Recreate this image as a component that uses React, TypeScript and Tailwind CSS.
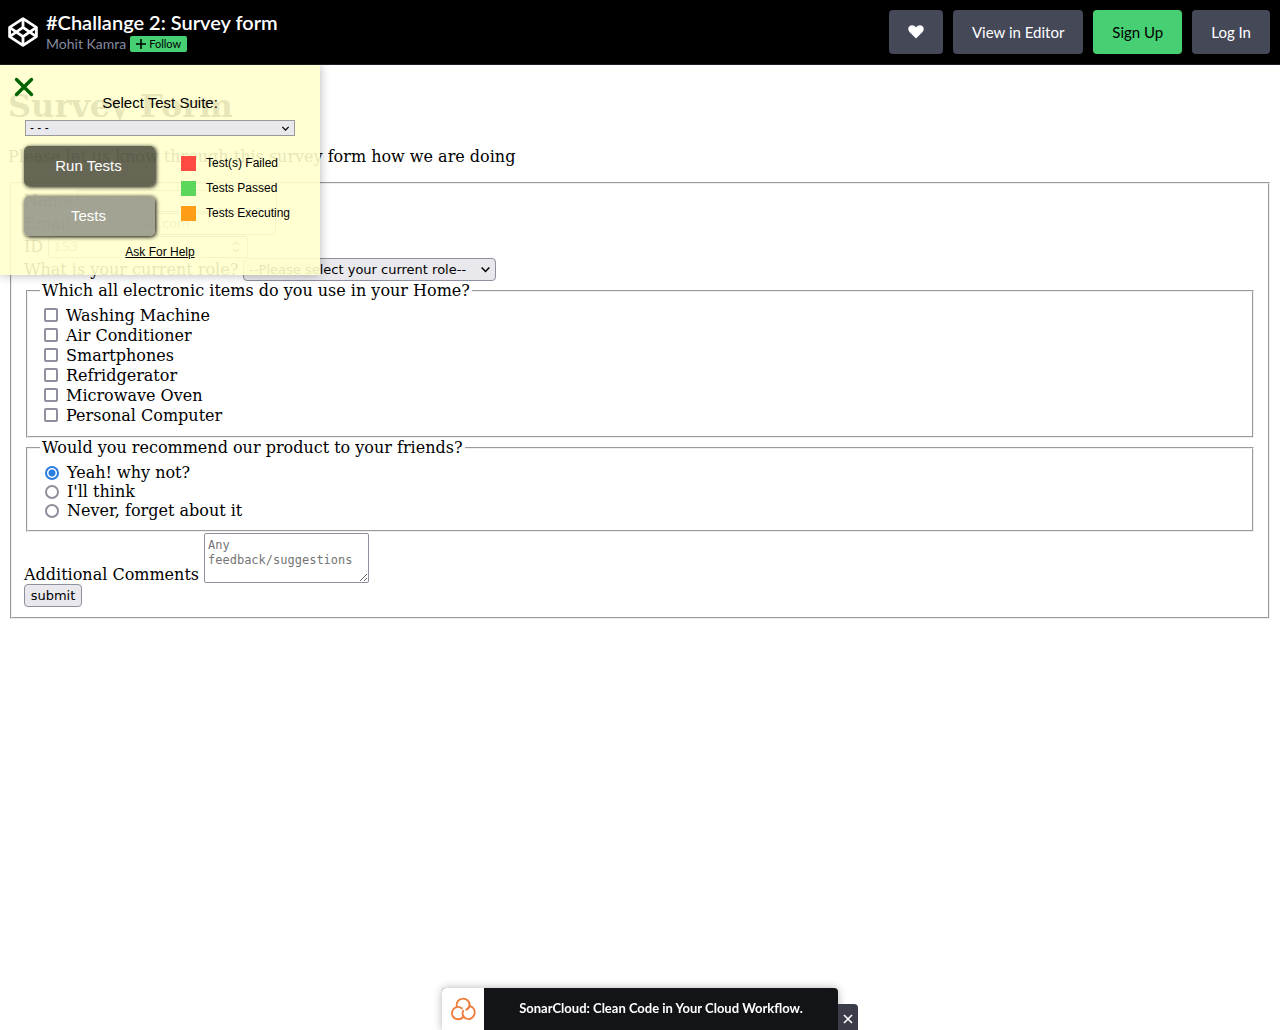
import React from "react";

const appliances = [
  "Washing Machine",
  "Air Conditioner",
  "Smartphones",
  "Refridgerator",
  "Microwave Oven",
  "Personal Computer",
];

const answers = ["Yeah! why not?", "I'll think", "Never, forget about it"];

const legend = [
  { label: "Test(s) Failed", swatch: "bg-[#ff4b42]" },
  { label: "Tests Passed", swatch: "bg-[#5bd75b]" },
  { label: "Tests Executing", swatch: "bg-[#ff9e16]" },
];

function Chevron({ className }: { className: string }) {
  return (
    <svg className={className} viewBox="0 0 10 10" fill="none" stroke="currentColor" strokeWidth="1.4" aria-hidden="true">
      <path d="M1.5 3.2 5 6.8 8.5 3.2" />
    </svg>
  );
}

function Header() {
  return (
    <header className="flex h-[65px] items-center justify-between border-b border-[#1e1f26] bg-black px-2 pr-[10px] font-['Lato',sans-serif] text-white">
      <div className="flex items-center gap-2">
        <svg className="h-[30px] w-[30px]" viewBox="0 0 30 30" fill="none" stroke="#fff" strokeWidth="2.8" strokeLinejoin="round" aria-label="CodePen">
          <path d="M15 1.700 28.400 10.400V19.600L15 28.300 1.600 19.600V10.400Z" />
          <path d="M15 1.700V10.400M15 19.600V28.300M1.600 10.400 15 19.600 28.400 10.400M1.600 19.600 15 10.400 28.400 19.600" />
        </svg>
        <div>
          <h1 className="text-[20px] leading-6 font-semibold">#Challange 2: Survey form</h1>
          <div className="flex h-5 items-center gap-1">
            <a href="#author" className="text-[14px] leading-5 text-[#868ca0]">Mohit Kamra</a>
            <button className="flex h-4 items-center gap-[3px] rounded-[2px] bg-[#47cf73] px-[6px] text-[11px] text-black">
              <svg className="h-[10px] w-[10px]" viewBox="0 0 10 10" stroke="currentColor" strokeWidth="1.6" aria-hidden="true">
                <path d="M5 0V10M0 5H10" />
              </svg>
              Follow
            </button>
          </div>
        </div>
      </div>
      <nav className="flex gap-[10px] text-[15px]">
        <button aria-label="Love" className="flex h-11 w-[54px] items-center justify-center rounded bg-[#444857]">
          <svg className="h-4 w-4" viewBox="0 0 16 16" fill="#fff" aria-hidden="true">
            <path d="M8 14.600 1.500 8.100C-.2 6.200-.1 3.600 1.500 2.200 3.300.7 6.400 1 8 3.400 9.600 1 12.700.7 14.500 2.200 16.100 3.600 16.200 6.200 14.500 8.100Z" />
          </svg>
        </button>
        <button className="h-11 rounded bg-[#444857] px-[19px]">View in Editor</button>
        <button className="h-11 rounded bg-[#47cf73] px-[19px] text-black">Sign Up</button>
        <button className="h-11 rounded bg-[#444857] px-[19px]">Log In</button>
      </nav>
    </header>
  );
}

function TestPanel() {
  return (
    <aside className="absolute top-0 left-0 h-[210px] w-80 bg-[#ffffcc]/90 font-['Liberation_Sans',sans-serif] text-black shadow-[0_0_10px_rgba(0,0,0,0.3)]">
      <button aria-label="Close" className="absolute top-3 left-[14px]">
        <svg className="h-5 w-5" viewBox="0 0 20 20" stroke="#006400" strokeWidth="3.4" strokeLinecap="round" aria-hidden="true">
          <path d="M2.500 2.500 17.500 17.500M17.500 2.500 2.500 17.500" />
        </svg>
      </button>
      <label htmlFor="suite" className="block pt-7 text-center text-[15px] leading-5">Select Test Suite:</label>
      <div className="relative mx-[25px] mt-[7px]">
        <select id="suite" className="block h-4 w-full appearance-none border border-[#999] bg-[#e9e9ed] px-1 text-[12px] leading-3">
          <option>- - -</option>
        </select>
        <Chevron className="pointer-events-none absolute top-1 right-[5px] h-[9px] w-[9px]" />
      </div>
      <div className="mx-6 mt-[10px] flex gap-[26px]">
        <div className="flex w-[131px] shrink-0 flex-col gap-[10px] text-[15px] text-white">
          <button className="h-10 rounded-[5px] bg-black/60 pr-[2px] shadow-[1px_1px_4px_#000]">Run Tests</button>
          <button className="h-10 rounded-[5px] bg-[#8c8c83]/80 pr-[2px] shadow-[1px_1px_4px_#000]">Tests</button>
        </div>
        <ul className="flex flex-col gap-[10px] pt-[10px] text-[12px] leading-[15px]">
          {legend.map((item) => (
            <li key={item.label} className="flex items-center gap-[10px] whitespace-nowrap">
              <span className={"h-[15px] w-[15px] shrink-0 " + item.swatch} />
              {item.label}
            </li>
          ))}
        </ul>
      </div>
      <div className="mt-2 text-center text-[12px] leading-4">
        <a href="#help" className="underline">Ask For Help</a>
      </div>
    </aside>
  );
}

const field =
  "rounded-[3px] border border-[#8f8f9d] bg-white px-1 font-['DejaVu_Sans',sans-serif] text-[13px] placeholder:text-[#8c8c8c]";
const group = "mx-[2px] border-2 border-[#eeeeee] px-3 [border-style:groove]";

function SurveyForm() {
  return (
    <form className="px-2 pt-[22px] font-['DejaVu_Serif',serif] text-base leading-[19px] text-black" onSubmit={(e) => e.preventDefault()}>
      <h2 className="text-[32px] leading-[38px] font-bold">Survey Form</h2>
      <p className="mt-[22px] mb-4">Please let us know through this survey form how we are doing</p>
      <fieldset className={group + " pt-[5px] pb-[10px]"}>
        <div className="flex h-[23px] items-center gap-[5px]">
          <label htmlFor="name">Name</label>
          <input id="name" className={field + " h-[22px] w-[200px]"} placeholder="John Smith" />
        </div>
        <div className="flex h-[23px] items-center gap-[5px]">
          <label htmlFor="email">Email</label>
          <input id="email" type="email" className={field + " h-[22px] w-[200px]"} placeholder="john@gmail.com" />
        </div>
        <div className="flex h-[23px] items-center gap-[5px]">
          <label htmlFor="id">ID</label>
          <div className="relative">
            <input id="id" type="number" className={field + " block h-[22px] w-[200px]"} placeholder="153" />
            <svg className="pointer-events-none absolute top-[5px] right-2 h-3 w-2" viewBox="0 0 8 12" fill="none" stroke="#555" strokeWidth="1.2" aria-hidden="true">
              <path d="M1 4 4 1 7 4M1 8 4 11 7 8" />
            </svg>
          </div>
        </div>
        <div className="flex h-[23px] items-center gap-[5px]">
          <label htmlFor="role">What is your current role?</label>
          <div className="relative">
            <select id="role" className="block h-[23px] w-[253px] appearance-none rounded border border-[#8f8f9d] bg-[#e9e9ed] px-[5px] font-['DejaVu_Sans',sans-serif] text-[13px]">
              <option>--Please select your current role--</option>
            </select>
            <Chevron className="pointer-events-none absolute top-[6px] right-[5px] h-[11px] w-[11px]" />
          </div>
        </div>
        <fieldset className={group + " pt-[5px] pb-[11px]"}>
          <legend className="px-[2px]">Which all electronic items do you use in your Home?</legend>
          {appliances.map((item) => (
            <label key={item} className="flex h-5 items-center gap-2 pl-1">
              <input type="checkbox" className="h-[14px] w-[14px] appearance-none rounded-[2px] border-2 border-[#8f8f9d] bg-white" />
              {item}
            </label>
          ))}
        </fieldset>
        <fieldset className={group + " pt-[6px] pb-[10px]"}>
          <legend className="px-[2px]">Would you recommend our product to your friends?</legend>
          {answers.map((item, i) => (
            <label key={item} className="flex h-[19px] items-center gap-2 pl-[5px]">
              <input
                type="radio"
                name="recommend"
                defaultChecked={i === 0}
                className="h-[14px] w-[14px] appearance-none rounded-full border-2 border-[#8f8f9d] bg-white checked:border-[#2a7de1] checked:bg-[radial-gradient(circle,#2a7de1_3px,#fff_4px)]"
              />
              {item}
            </label>
          ))}
        </fieldset>
        <div className="flex items-end gap-[5px] pt-px">
          <label htmlFor="comments" className="leading-[17px]">Additional Comments</label>
          <textarea
            id="comments"
            className="block h-[50px] w-[165px] rounded-[2px] border border-[#8f8f9d] px-[3px] py-1 font-['DejaVu_Sans_Mono',monospace] text-[12px] leading-[15px] placeholder:text-[#757575]"
            placeholder="Any feedback/suggestions"
          />
        </div>
        <button className="mt-px block h-[23px] w-[58px] rounded border border-[#8f8f9d] bg-[#e9e9ed] font-['DejaVu_Sans',sans-serif] text-[13px]">submit</button>
      </fieldset>
    </form>
  );
}

function Sponsor() {
  return (
    <div className="fixed inset-x-0 bottom-0 flex items-end justify-center pl-5 font-['Lato',sans-serif]">
      <a href="#sponsor" className="flex h-[42px] w-[396px] overflow-hidden rounded-t bg-[#131417] text-[13px] font-bold text-white shadow-[0_0_8px_rgba(0,0,0,0.3)]">
        <span className="flex w-[42px] items-center justify-center bg-white">
          <svg className="h-[26px] w-[26px]" viewBox="0 0 26 26" fill="none" stroke="#ee7c3c" strokeWidth="1.9" strokeLinecap="round" aria-hidden="true">
            <path d="M6.700 10.500C5.900 5.800 9 2.600 13 2.600S20 5.800 19.500 9.500C19.200 11.500 18 13 16.300 13.600" />
            <path d="M12 12.500C8.500 9.500 4 11 2.500 14.500 .8 19 3.500 23.300 8 23.300 10.500 23.300 12.600 22 13.500 20" />
            <path d="M19.500 10C23.500 11 25.300 14.500 24.500 18 23.500 22 19.500 24.300 16 22.500 12.500 20.800 12 17.500 13.200 14.800" />
          </svg>
        </span>
        <span className="flex flex-1 items-center justify-center">SonarCloud: Clean Code in Your Cloud Workflow.</span>
      </a>
      <button aria-label="Close sponsor" className="flex h-[26px] w-5 items-center justify-center rounded-tr bg-[#3a3c4a]">
        <svg className="mt-1 h-[10px] w-[10px]" viewBox="0 0 10 10" stroke="#fff" strokeWidth="1.6" aria-hidden="true">
          <path d="M1 1 9 9M9 1 1 9" />
        </svg>
      </button>
    </div>
  );
}

export default function App() {
  return (
    <div className="min-h-screen bg-white">
      <Header />
      <main className="relative">
        <SurveyForm />
        <TestPanel />
      </main>
      <Sponsor />
    </div>
  );
}
